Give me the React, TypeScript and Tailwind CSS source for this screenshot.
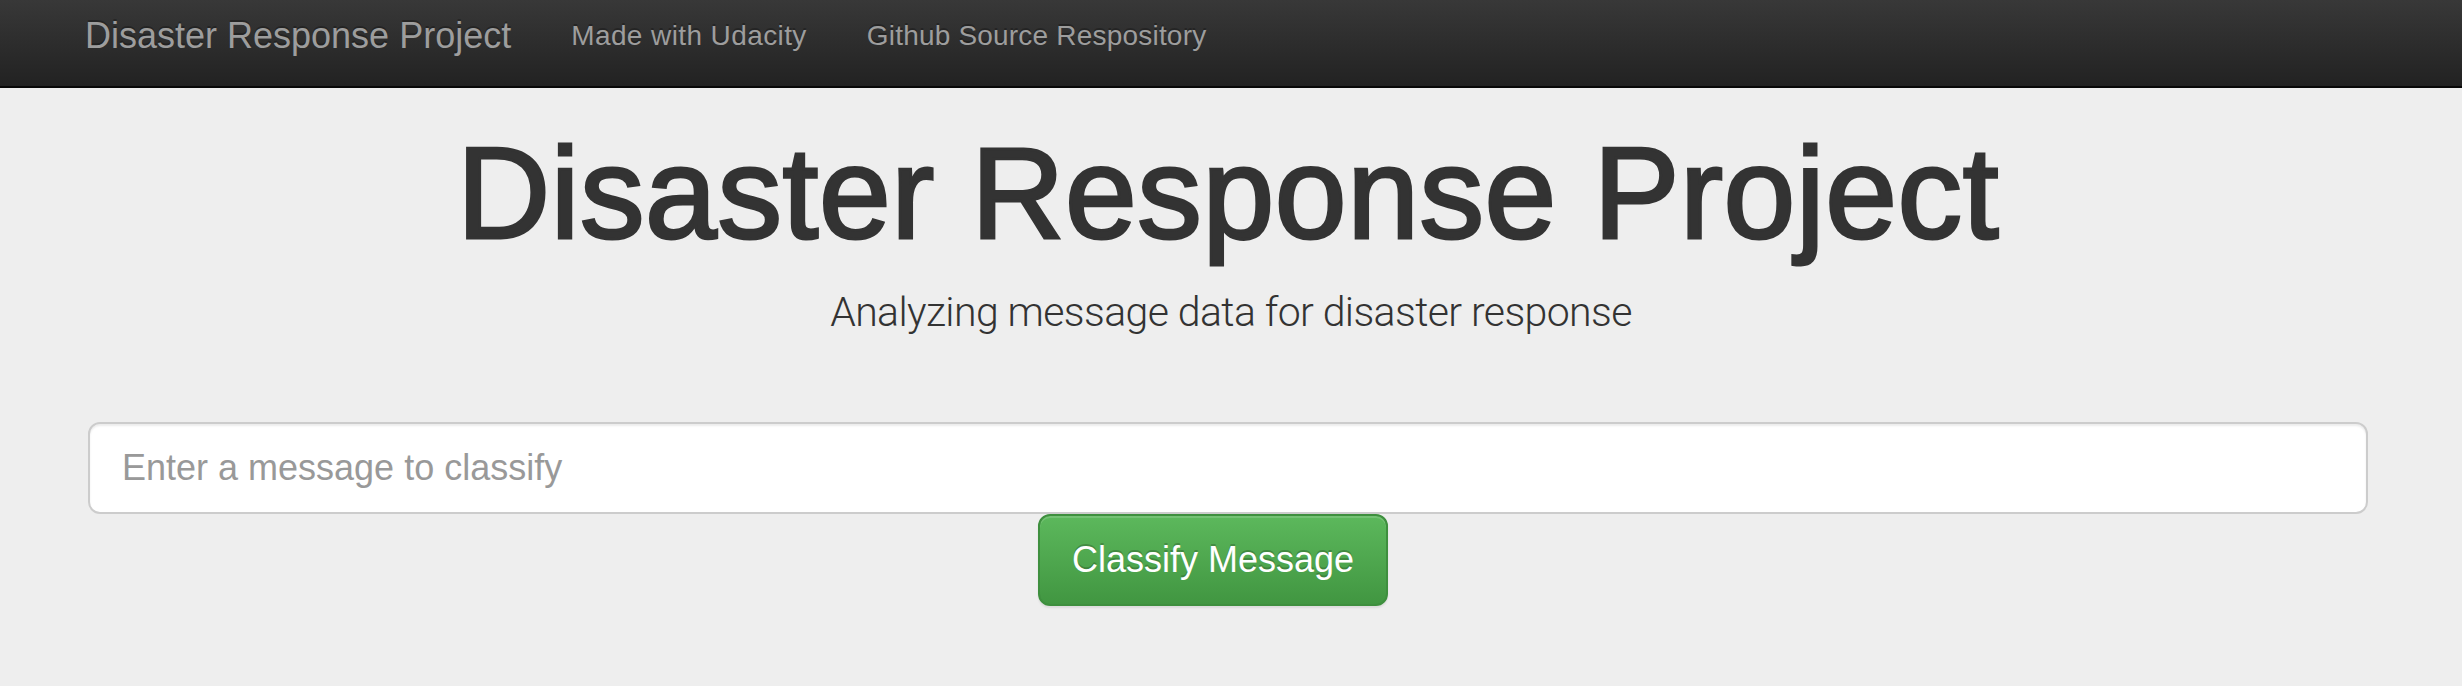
import React from "react";

export default function App() {
  return (
    <div className="min-h-[686px] w-[2462px] bg-[#eeeeee] font-['Liberation_Sans',Arial,sans-serif]">
      <nav className="h-[88px] border-b-2 border-[#080808] bg-[linear-gradient(to_bottom,#383838_0%,#222222_100%)] flex items-start">
        <a className="ml-[85px] pt-[16px] leading-[40px] text-[36px] text-[#9d9d9d] [text-shadow:0_-2px_0_rgba(0,0,0,0.25)] whitespace-nowrap">
          Disaster Response Project
        </a>
        <a className="ml-[60px] pt-[16px] leading-[40px] text-[28px] text-[#9d9d9d] [text-shadow:0_-2px_0_rgba(0,0,0,0.25)] whitespace-nowrap tracking-[0.4px]">
          Made with Udacity
        </a>
        <a className="ml-[60px] pt-[16px] leading-[40px] text-[28px] text-[#9d9d9d] [text-shadow:0_-2px_0_rgba(0,0,0,0.25)] whitespace-nowrap tracking-[0.2px]">
          Github Source Respository
        </a>
      </nav>

      <div className="pt-[34px]">
        <h1 className="pr-[6px] text-center text-[129px] leading-[142px] text-[#333333] tracking-[0.6px] [-webkit-text-stroke:3px_#333333] whitespace-nowrap">
          Disaster Response Project
        </h1>
        <p className="mt-[18px] text-center text-[41px] leading-[60px] text-[#333333] font-light tracking-[-0.6px] font-['Roboto',sans-serif] whitespace-nowrap">
          Analyzing message data for disaster response
        </p>

        <div className="ml-[88px] mt-[80px] w-[2280px]">
          <input
            type="text"
            placeholder="Enter a message to classify"
            className="block w-full h-[92px] rounded-[12px] border-2 border-[#cccccc] bg-white px-[32px] text-[36px] text-[#555555] placeholder:text-[#999999] shadow-[inset_0_2px_2px_rgba(0,0,0,0.075)] outline-none font-['Liberation_Sans',Arial,sans-serif]"
          />
          <button
            type="button"
            className="ml-[950px] h-[92px] w-[350px] rounded-[12px] border-2 border-[#3e8f3e] bg-[linear-gradient(to_bottom,#5cb85c_0%,#419641_100%)] text-[36px] text-white [text-shadow:0_-2px_0_rgba(0,0,0,0.2)] shadow-[inset_0_2px_0_rgba(255,255,255,0.15),0_2px_2px_rgba(0,0,0,0.075)] whitespace-nowrap font-['Liberation_Sans',Arial,sans-serif]"
          >
            Classify Message
          </button>
        </div>
      </div>
    </div>
  );
}
